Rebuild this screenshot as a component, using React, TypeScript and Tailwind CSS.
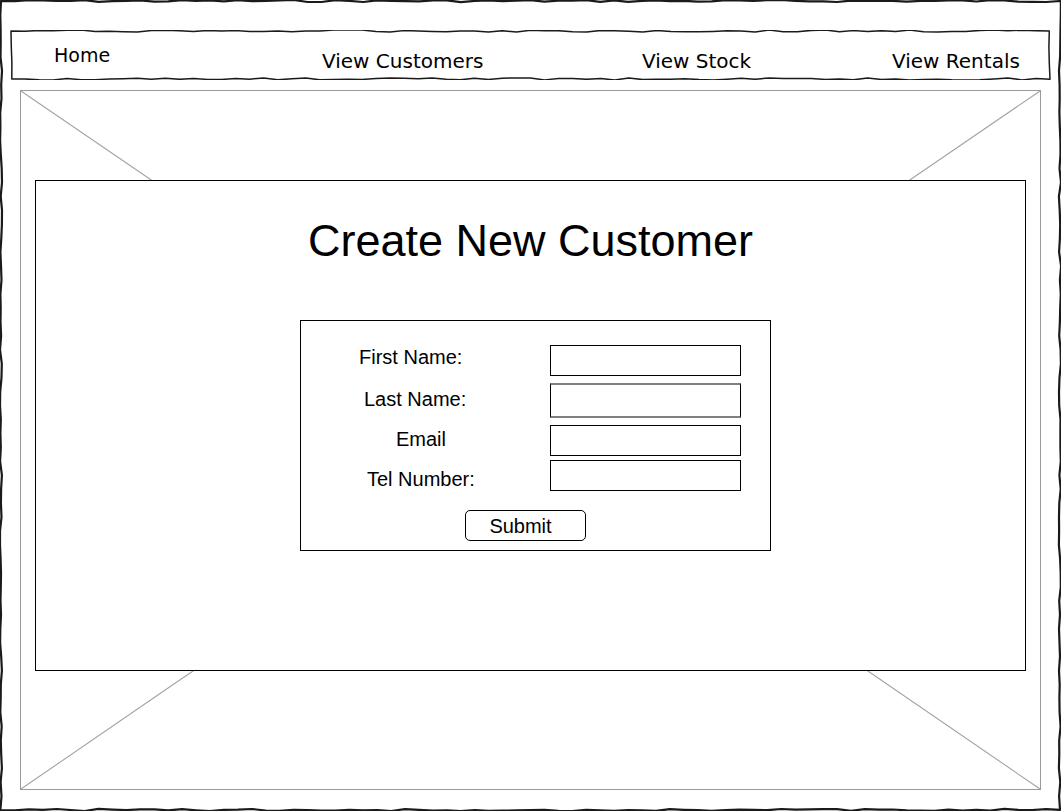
import React from "react"

// hand-drawn looking rectangle outline, deterministic wobble
function wobbleRect(x0: number, y0: number, x1: number, y1: number, seed: number, amp = 1.1) {
  let s = seed
  const rnd = () => {
    s = (s * 9301 + 49297) % 233280
    return s / 233280 - 0.5
  }
  const pts: [number, number][] = []
  const side = (ax: number, ay: number, bx: number, by: number) => {
    const len = Math.hypot(bx - ax, by - ay)
    const n = Math.max(2, Math.round(len / 14))
    for (let i = 0; i < n; i++) {
      const t = i / n
      const horiz = ay === by
      const j = rnd() * 2 * amp
      pts.push([ax + (bx - ax) * t + (horiz ? 0 : j), ay + (by - ay) * t + (horiz ? j : 0)])
    }
  }
  side(x0, y0, x1, y0)
  side(x1, y0, x1, y1)
  side(x1, y1, x0, y1)
  side(x0, y1, x0, y0)
  return "M" + pts.map(p => `${p[0].toFixed(1)} ${p[1].toFixed(1)}`).join(" L") + " Z"
}

function WobblyBorder({ w, h, seed, stroke = "#1a1a1a", width = 1.6 }: { w: number; h: number; seed: number; stroke?: string; width?: number }) {
  return (
    <svg
      className="absolute inset-0 pointer-events-none"
      width={w}
      height={h}
      viewBox={`0 0 ${w} ${h}`}
    >
      <path d={wobbleRect(1, 1, w - 1, h - 1, seed)} fill="none" stroke={stroke} strokeWidth={width} strokeLinejoin="round" />
    </svg>
  )
}

const navFont = { fontFamily: '"DejaVu Sans", Verdana, sans-serif' }

function Row({ label, labelLeft, labelTop, height, inputClass }: { label: string; labelLeft: string; labelTop: string; height: string; inputClass: string }) {
  return (
    <div className={`flex items-start ${height}`}>
      <span className={`${labelLeft} ${labelTop} text-[20px] leading-[20px] text-black`}>{label}</span>
      <div className={`ml-auto w-[191px] h-full bg-white ${inputClass}`} />
    </div>
  )
}

export default function App() {
  return (
    <div
      className="relative w-[1061px] h-[811px] bg-white overflow-hidden pt-[30px] px-[10px]"
      style={{ fontFamily: '"Liberation Sans", Arial, sans-serif' }}
    >
      <WobblyBorder w={1061} h={811} seed={7} width={2.2} />

      {/* nav */}
      <nav className="relative h-[50px] w-[1041px]" style={navFont}>
        <WobblyBorder w={1041} h={50} seed={31} width={1.5} />
        <div className="grid grid-cols-[268px_320px_250px_1fr] pl-[44px] text-[20px] leading-[20px] text-black">
          <a className="pt-[15px] text-[19px]">Home</a>
          <a className="pt-[21px]">View Customers</a>
          <a className="pt-[21px]">View Stock</a>
          <a className="pt-[21px]">View Rentals</a>
        </div>
      </nav>

      {/* image placeholder */}
      <div className="relative mt-[10px] mx-[10px] w-[1021px] h-[700px] border border-[#9a9a9a] pt-[89px] pl-[14px]">
        <svg className="absolute inset-0" width={1019} height={698} viewBox="0 0 1019 698">
          <path d="M0 0 L120 82 L260 178 L420 288 L560 383 L700 479 L860 589 L1019 698" fill="none" stroke="#a3a3a3" strokeWidth={1.1} />
          <path d="M1019 0 L880 95 L740 191 L600 287 L450 390 L300 493 L150 595 L0 698" fill="none" stroke="#a3a3a3" strokeWidth={1.1} />
        </svg>

        {/* panel */}
        <div className="relative w-[991px] h-[491px] bg-white border border-black flex flex-col">
          <h1 className="mt-[37px] text-center text-[45px] leading-[45px] text-black">Create New Customer</h1>

          <form className="mt-[57px] ml-[264px] w-[471px] h-[231px] border border-black pt-[24px] pr-[29px] flex flex-col">
            <Row label="First Name:" labelLeft="ml-[58px]" labelTop="mt-[2px]" height="h-[31px]" inputClass="border border-black" />
            <div className="h-[7px]" />
            <Row label="Last Name:" labelLeft="ml-[63px]" labelTop="mt-[6px]" height="h-[35px]" inputClass="border border-x-black border-y-2 border-y-[#808080]" />
            <div className="h-[7px]" />
            <Row label="Email" labelLeft="ml-[95px]" labelTop="mt-[4px]" height="h-[31px]" inputClass="border border-black" />
            <div className="h-[4px]" />
            <Row label="Tel Number:" labelLeft="ml-[66px]" labelTop="mt-[9px]" height="h-[31px]" inputClass="border border-black" />

            <button
              type="button"
              className="mt-[19px] ml-[164px] w-[121px] h-[31px] border border-black rounded-[5px] bg-white pr-[10px] text-[20px] leading-[20px] text-black"
            >
              Submit
            </button>
          </form>
        </div>
      </div>
    </div>
  )
}
